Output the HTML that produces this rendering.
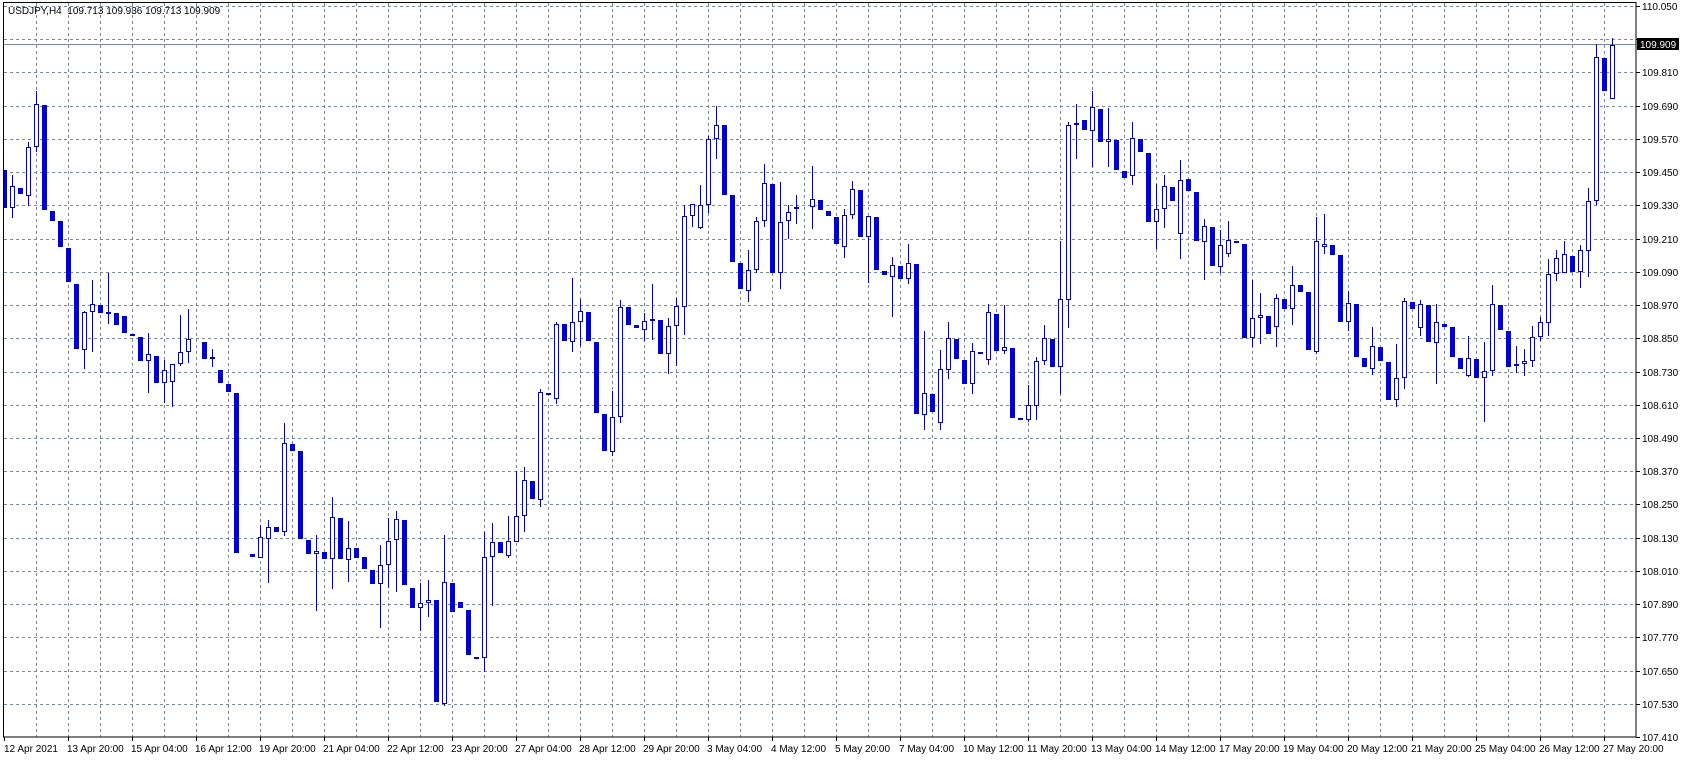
<!DOCTYPE html>
<html><head><meta charset="utf-8">
<style>
html,body{margin:0;padding:0;background:#fff;}
body{width:1684px;height:761px;overflow:hidden;position:relative;font-family:"Liberation Sans",sans-serif;}
svg{position:absolute;left:0;top:0;}
text{font-family:"Liberation Sans",sans-serif;font-size:10px;fill:#000;}
</style></head><body>
<svg id="c" width="1684" height="761" xmlns="http://www.w3.org/2000/svg" shape-rendering="crispEdges">
<g id="grid" stroke="#778899" stroke-width="1" stroke-dasharray="3,3" fill="none"></g>
<line x1="3" y1="44.5" x2="1636" y2="44.5" stroke="#778899" stroke-width="1"/>
<g id="candles"></g>
<rect x="3.5" y="2.5" width="1632.5" height="734.5" fill="none" stroke="#000" stroke-width="1"/>
<g id="axis"></g>
<text x="8" y="14">USDJPY,H4&#160; 109.713 109.936 109.713 109.909</text>
<rect x="1637" y="38" width="42" height="12" fill="#000"/>
<text x="1640" y="48" style="fill:#fff">109.909</text>
</svg>
<script>
(function(){
var NS="http://www.w3.org/2000/svg";
function el(p,n,a){var e=document.createElementNS(NS,n);for(var k in a)e.setAttribute(k,a[k]);p.appendChild(e);return e;}
var g=document.getElementById('grid');
for(var x=36;x<=1604;x+=32){el(g,'line',{x1:x+0.5,y1:3,x2:x+0.5,y2:737});}
for(var k=0;k<22;k++){var y=Math.round(6+33.23*k)+0.5;el(g,'line',{x1:4,y1:y,x2:1636,y2:y});}
var ax=document.getElementById('axis');
for(var k=0;k<=22;k++){var y=Math.round(6+33.23*k);
 el(ax,'line',{x1:1636,y1:y+0.5,x2:1640,y2:y+0.5,stroke:'#000'});
 if(k==1)continue;
 var t=el(ax,'text',{x:1642,y:y+4});t.textContent=(110.05-0.12*k).toFixed(3);}
var d=["12 Apr 2021","13 Apr 20:00","15 Apr 04:00","16 Apr 12:00","19 Apr 20:00","21 Apr 04:00","22 Apr 12:00","23 Apr 20:00","27 Apr 04:00","28 Apr 12:00","29 Apr 20:00","3 May 04:00","4 May 12:00","5 May 20:00","7 May 04:00","10 May 12:00","11 May 20:00","13 May 04:00","14 May 12:00","17 May 20:00","19 May 04:00","20 May 12:00","21 May 20:00","25 May 04:00","26 May 12:00","27 May 20:00"];
for(var i=0;i<d.length;i++){var x=4+64*i;
 el(ax,'line',{x1:x+0.5,y1:737,x2:x+0.5,y2:741,stroke:'#000'});
 var t=el(ax,'text',{x:x+(i==0?0:-1),y:752});t.textContent=d[i];}
// x, bodyTop, bodyBot, wickTop, wickBot, bull
var C=[
[4,170,208,170,208,0],[12,186,208,175,218,1],[20,188,194,0,0,0],[28,147,196,142,206,1],[36,104,147,91,152,1],[44,105,210,0,0,0],[52,211,221,0,0,0],[60,221,247,0,0,0],[68,248,282,0,0,0],[76,284,349,0,0,0],
[84,312,350,311,369,1],[92,304,312,280,352,1],[100,305,313,0,0,0],[108,312,314,273,324,0],[116,313,325,0,0,0],[124,316,333,0,0,0],[132,334,335,0,0,0],[140,337,361,0,0,0],[148,354,361,333,393,1],[156,356,383,0,0,0],
[164,370,383,360,403,1],[172,364,382,364,407,1],[180,352,364,315,366,1],[188,339,352,309,363,1],[204,342,359,0,0,0],[212,357,359,349,367,1],[220,370,383,0,0,0],[228,384,392,0,0,0],[236,393,553,0,0,0],[252,554,557,0,0,0],
[260,537,558,525,558,1],[268,527,539,520,583,1],[276,527,532,0,0,0],[284,443,532,423,536,1],[292,444,451,0,0,0],[300,451,539,0,0,0],[308,540,554,0,0,0],[316,551,554,535,611,1],[324,552,559,0,0,0],[332,517,559,497,589,1],
[340,518,559,0,0,0],[348,548,560,521,582,1],[356,548,558,0,0,0],[364,557,569,0,0,0],[372,570,584,0,0,0],[380,565,584,545,628,1],[388,541,565,518,588,1],[396,519,540,511,592,1],[404,520,585,0,0,0],[412,588,608,0,0,0],
[420,603,608,583,631,1],[428,600,603,580,617,1],[436,600,702,0,0,0],[444,582,704,535,706,1],[452,583,612,0,0,0],[460,602,608,0,0,0],[468,610,655,0,0,0],[476,657,658,0,0,0],[484,557,658,532,672,1],[492,542,557,523,606,1],
[500,542,553,0,0,0],[508,541,556,516,558,1],[516,516,542,471,542,1],[524,480,516,467,532,1],[532,481,499,0,0,0],[540,392,500,389,507,1],[548,393,394,0,0,0],[556,324,399,322,404,1],[564,324,341,0,0,0],[572,322,342,278,352,1],
[580,311,322,299,346,1],[588,312,341,0,0,0],[596,342,413,0,0,0],[604,414,451,0,0,0],[612,417,452,391,456,1],[620,307,417,300,423,1],[628,307,325,0,0,0],[636,325,328,0,0,0],[644,321,330,313,341,1],[652,319,321,284,340,1],
[660,320,354,0,0,0],[668,326,354,318,374,1],[676,306,326,298,366,1],[684,216,307,205,335,1],[692,204,216,204,227,1],[700,205,228,185,229,1],[708,139,205,136,213,1],[716,125,139,106,159,1],[724,125,195,0,0,0],[732,195,262,0,0,0],
[740,263,289,0,0,0],[748,270,291,250,302,1],[756,221,270,217,273,1],[764,183,221,164,227,1],[772,184,273,0,0,0],[780,222,273,182,289,1],[788,212,221,205,239,1],[796,207,209,195,224,0],[812,199,207,166,229,1],[820,200,210,0,0,0],
[828,211,216,0,0,0],[836,217,244,0,0,0],[844,215,247,209,258,1],[852,189,215,181,219,1],[860,190,237,0,0,0],[868,216,237,216,283,1],[876,217,270,0,0,0],[884,271,275,0,0,0],[892,265,277,257,317,1],[900,266,279,0,0,0],
[908,263,279,244,284,1],[916,264,414,0,0,0],[924,393,415,331,430,1],[932,394,412,0,0,0],[940,369,423,350,430,1],[948,338,370,322,379,1],[956,339,359,0,0,0],[964,360,384,0,0,0],[972,351,384,343,394,1],[980,352,354,0,0,0],
[988,312,360,304,365,1],[996,314,351,0,0,0],[1004,347,351,305,354,1],[1012,348,418,0,0,0],[1020,418,420,0,0,0],[1028,405,420,385,422,1],[1036,361,406,357,420,1],[1044,338,361,325,365,1],[1052,339,367,0,0,0],[1060,299,367,241,394,1],
[1068,125,300,122,328,1],[1076,123,125,104,159,1],[1084,120,130,0,0,0],[1092,107,131,91,167,1],[1100,109,142,0,0,0],[1108,139,142,108,167,1],[1116,140,170,0,0,0],[1124,171,178,0,0,0],[1132,138,176,122,185,1],[1140,139,152,0,0,0],
[1148,153,222,0,0,0],[1156,209,222,184,249,1],[1164,186,209,175,228,1],[1172,187,201,0,0,0],[1180,180,234,160,259,1],[1188,179,191,0,0,0],[1196,192,241,0,0,0],[1204,226,242,219,280,1],[1212,227,266,0,0,0],[1220,245,267,230,273,1],
[1228,240,254,221,257,1],[1236,241,243,0,0,0],[1244,244,338,0,0,0],[1252,318,338,280,347,1],[1260,315,318,293,344,1],[1268,316,334,0,0,0],[1276,298,327,294,347,1],[1284,299,309,0,0,0],[1292,285,309,266,325,1],[1300,285,292,0,0,0],
[1308,292,350,0,0,0],[1316,241,352,217,354,1],[1324,244,247,214,254,1],[1332,245,255,0,0,0],[1340,255,322,0,0,0],[1348,303,322,291,331,1],[1356,304,357,0,0,0],[1364,358,367,0,0,0],[1372,346,369,327,375,1],[1380,347,361,0,0,0],
[1388,362,400,0,0,0],[1396,378,400,344,407,1],[1404,301,378,298,389,1],[1412,302,309,0,0,0],[1420,304,328,300,336,1],[1428,305,342,0,0,0],[1436,322,343,304,384,1],[1444,324,327,0,0,0],[1452,327,357,0,0,0],[1460,358,369,0,0,0],
[1468,358,376,336,377,1],[1476,359,378,0,0,0],[1484,371,378,342,422,1],[1492,304,371,285,376,1],[1500,305,330,0,0,0],[1508,331,367,0,0,0],[1516,364,366,346,373,1],[1524,361,364,349,376,1],[1532,337,361,326,367,1],[1540,322,337,317,341,1],
[1548,274,323,259,336,1],[1556,258,274,250,281,1],[1564,254,273,241,273,1],[1572,256,272,0,0,0],[1580,250,272,245,288,1],[1588,201,251,188,277,1],[1596,57,201,44,205,1],[1604,58,91,0,0,0],[1612,45,99,38,99,1]
];
var cg=document.getElementById('candles');var col='#0000d0';
for(var i=0;i<C.length;i++){var c=C[i],x=c[0],t=c[1],b=c[2],wt=c[3]||t,wb=c[4]||b;
 if(wt<t)el(cg,'rect',{x:x,y:wt,width:1,height:t-wt,fill:col});
 if(wb>b)el(cg,'rect',{x:x,y:b,width:1,height:wb-b,fill:col});
 if(c[5]){el(cg,'rect',{x:x-1.5,y:t+0.5,width:4,height:Math.max(b-t-1,1),fill:'#fff',stroke:col,'stroke-width':1});}
 else{var xl=Math.max(x-2,4);el(cg,'rect',{x:xl,y:t,width:x+3-xl,height:Math.max(b-t,2),fill:col});}
}
})();
</script>
</body></html>
